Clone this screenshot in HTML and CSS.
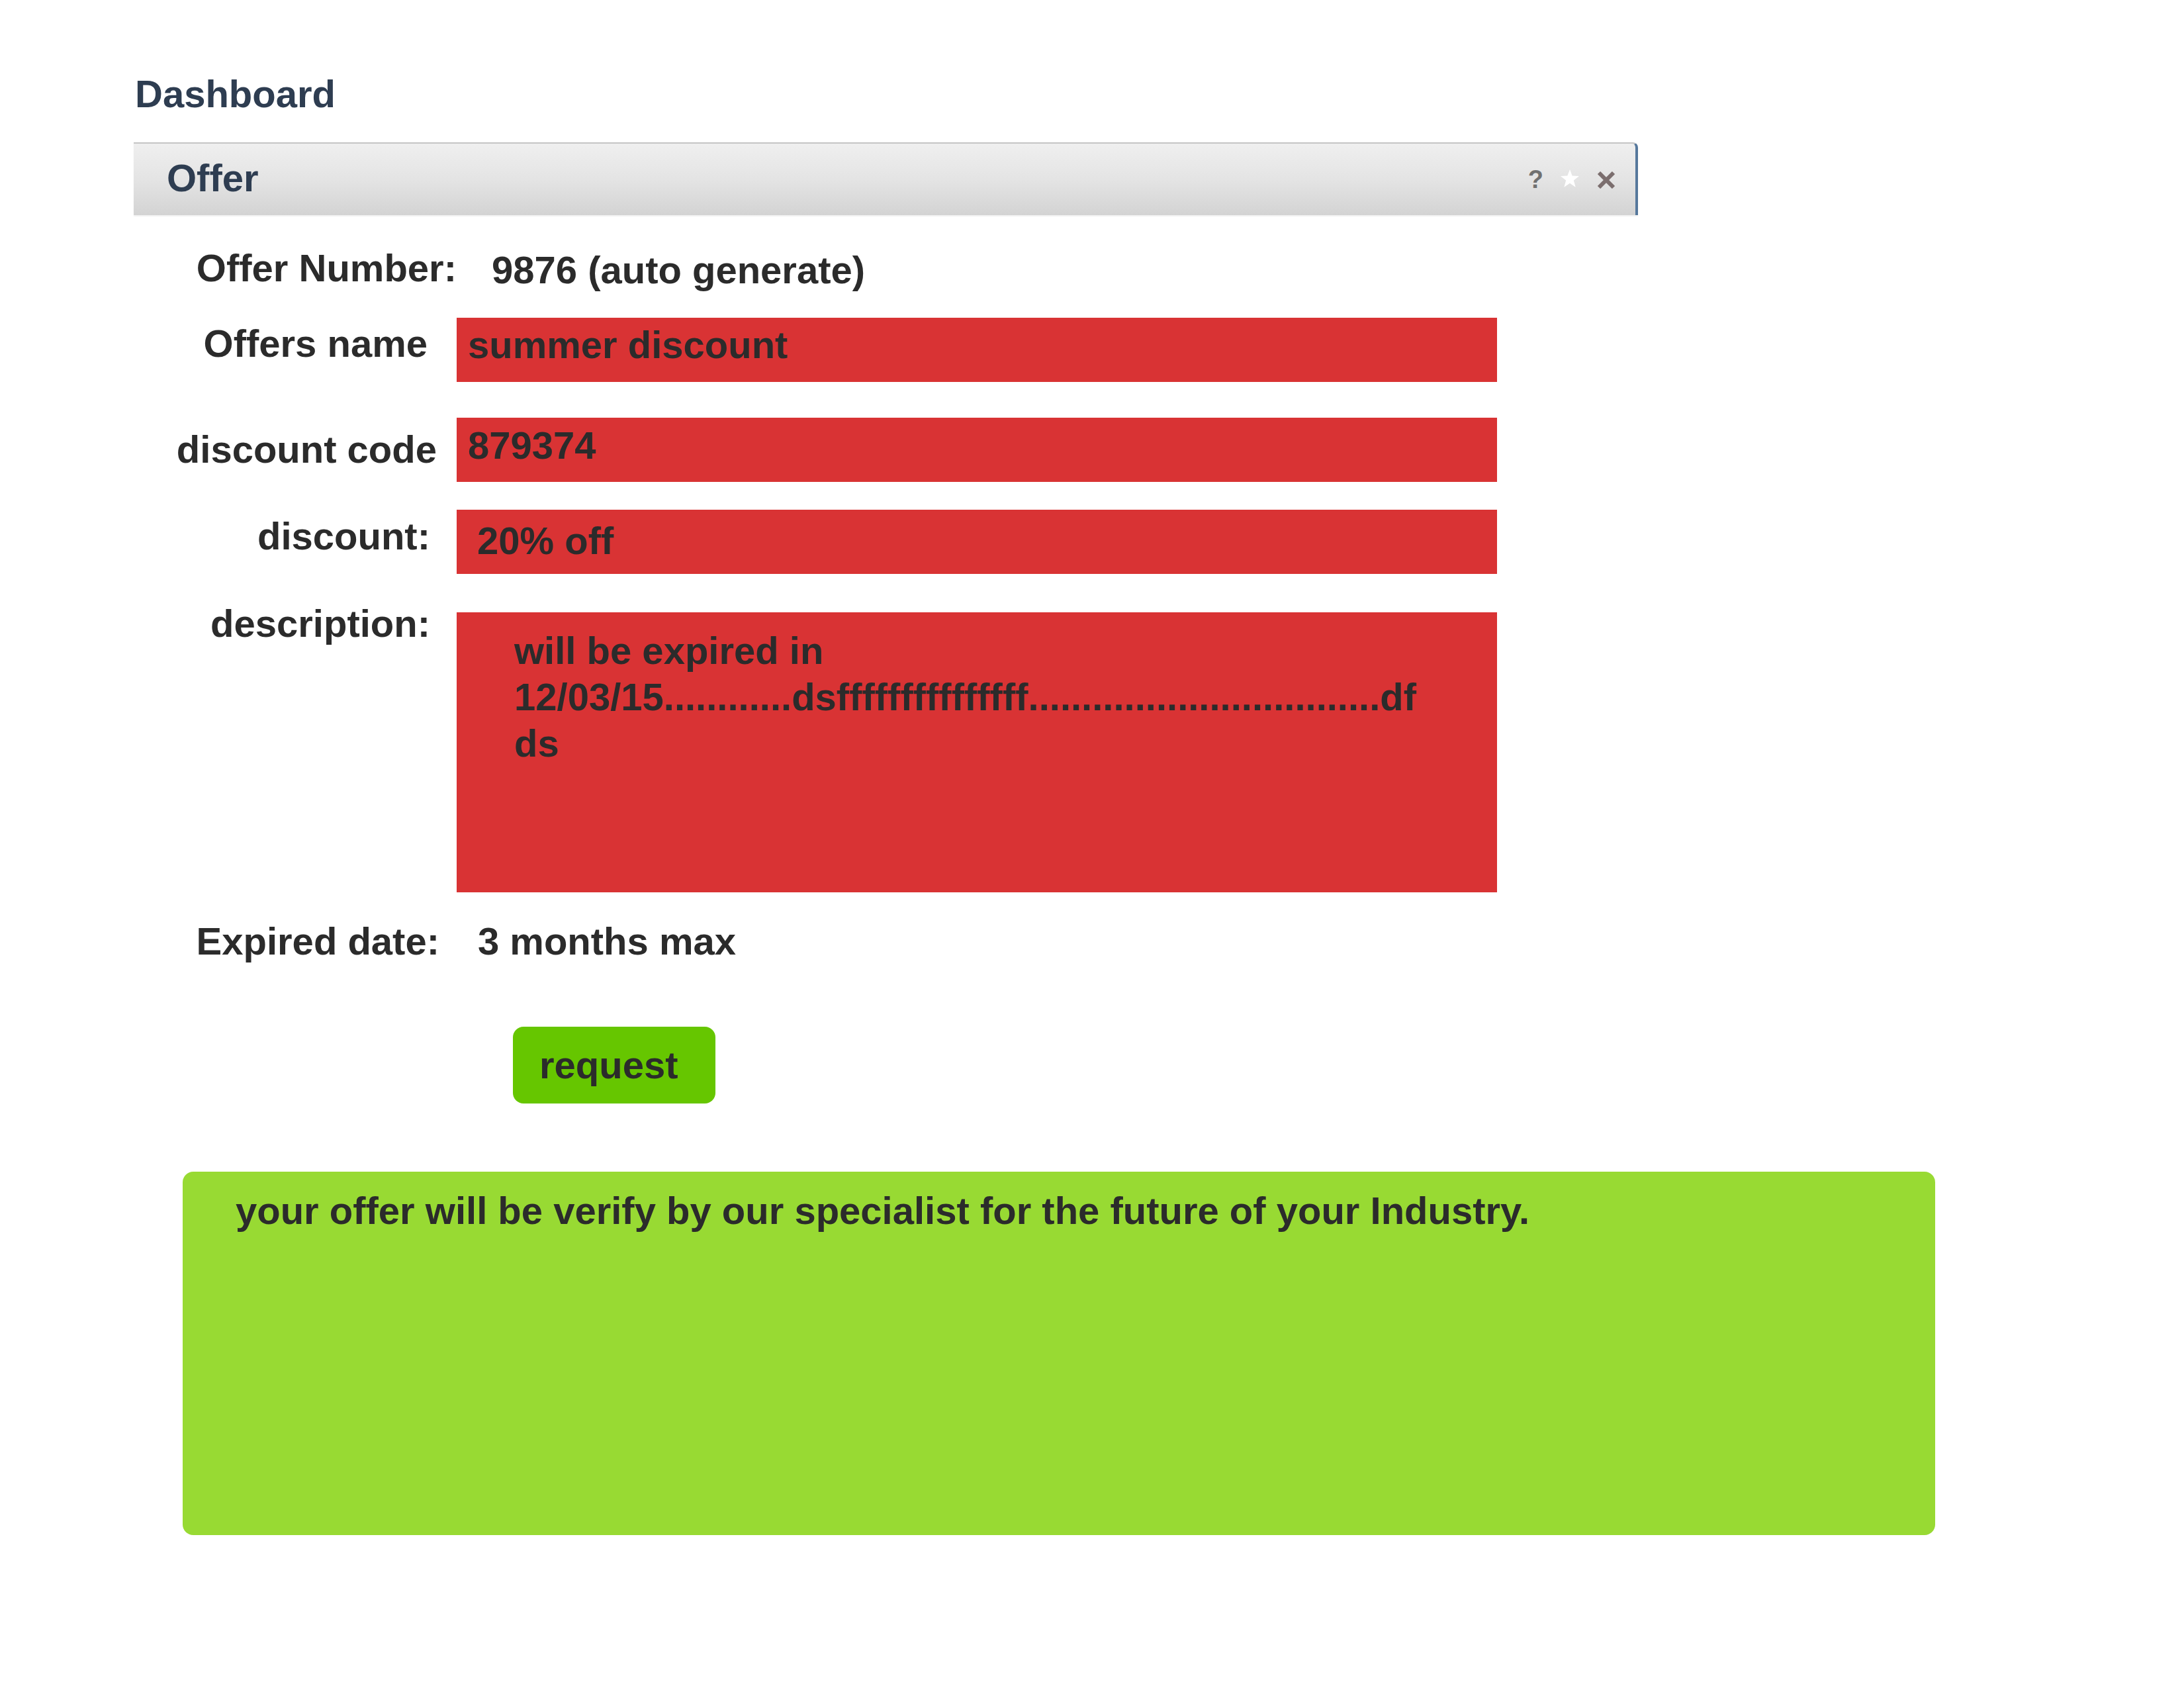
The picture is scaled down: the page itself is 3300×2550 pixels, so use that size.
FILE: index.html
```html
<!DOCTYPE html>
<html lang="en">
<head>
<meta charset="utf-8">
<title>Offer</title>
<link rel="stylesheet" href="styles.css">
</head>
<body>
<div class="page">
  <h1 class="dash">Dashboard</h1>

  <div class="panel-head">
    <h2 class="panel-title">Offer</h2>
    <div class="tools">
      <span class="tool-help">?</span>
      <svg class="tool-star" width="30" height="28" viewBox="0 0 30 28" aria-hidden="true">
        <polygon points="15,0 18.6,9.6 29,10 20.8,16.4 23.7,26.8 15,20.8 6.3,26.8 9.2,16.4 1,10 11.4,9.6" fill="#ffffff"/>
      </svg>
      <svg class="tool-close" width="28" height="26" viewBox="0 0 28 26" aria-hidden="true">
        <path d="M3 2 L25 24 M25 2 L3 24" stroke="#7b6e6e" stroke-width="6" fill="none"/>
      </svg>
    </div>
  </div>

  <div class="form">
    <div class="row row-number">
      <div class="label label-number">Offer Number:</div>
      <div class="value value-number">9876 (auto generate)</div>
    </div>

    <div class="row row-name">
      <div class="label label-name">Offers name</div>
      <div class="field field-name">summer discount</div>
    </div>

    <div class="row row-code">
      <div class="label label-code">discount code</div>
      <div class="field field-code">879374</div>
    </div>

    <div class="row row-discount">
      <div class="label label-discount">discount:</div>
      <div class="field field-discount">20% off</div>
    </div>

    <div class="row row-desc">
      <div class="label label-desc">description:</div>
      <div class="field field-desc">will be expired in 12/03/15............dsfffffffffffffff.................................df ds</div>
    </div>

    <div class="row row-expired">
      <div class="label label-expired">Expired date:</div>
      <div class="value value-expired">3 months max</div>
    </div>

    <div class="row row-action">
      <button class="btn-request" type="button">request</button>
    </div>
  </div>

  <div class="notice">your offer will be verify by our specialist for the future of your Industry.</div>
</div>
</body>
</html>
```

FILE: styles.css
```css
* {
  box-sizing: border-box;
}

html, body {
  margin: 0;
  padding: 0;
  background: #ffffff;
}

body {
  font-family: "Liberation Sans", Arial, Helvetica, sans-serif;
  font-weight: 700;
  font-size: 58px;
  line-height: 70px;
  color: #2b2b2b;
}

.page {
  width: 3300px;
  padding: 107px 0 0 200px;
}

.dash {
  margin: 0;
  padding-left: 4px;
  font-size: 58px;
  line-height: 70px;
  font-weight: 700;
  color: #2e3d51;
}

/* panel header */
.panel-head {
  margin: 38px 0 0 2px;
  width: 2273px;
  height: 110px;
  display: flex;
  align-items: flex-start;
  padding: 17px 30px 0 50px;
  border-top: 2px solid #c4c4c4;
  border-right: 4px solid #56789c;
  border-top-right-radius: 8px;
  background: linear-gradient(#efefef 0%, #e4e4e4 50%, #d3d3d3 100%);
  box-shadow: 0 2px 2px rgba(0, 0, 0, 0.06);
}

.panel-title {
  margin: 0;
  font-size: 58px;
  line-height: 70px;
  font-weight: 700;
  color: #2e3d51;
}

.tools {
  margin-left: auto;
  margin-top: 22px;
  height: 30px;
  display: flex;
  align-items: center;
}

.tool-help {
  font-size: 38px;
  line-height: 30px;
  color: #707070;
  font-weight: 700;
}

.tool-star {
  display: block;
  margin-left: 25px;
  margin-top: -2px;
}

.tool-close {
  display: block;
  margin-left: 26px;
  margin-top: 2px;
}

/* form */
.form {
  margin-top: 45px;
}

.row {
  display: flex;
  align-items: flex-start;
}

.label {
  flex: none;
  width: 490px;
  text-align: right;
  white-space: nowrap;
}

.label-number { padding-right: 0; }
.label-name { padding-right: 44px; padding-top: 4px; }
.label-code { padding-right: 30px; padding-top: 13px; }
.label-discount { padding-right: 40px; padding-top: 5px; }
.label-desc { padding-right: 40px; }
.label-expired { padding-right: 26px; }

.value-number {
  margin-left: 53px;
  padding-top: 3px;
}

.value-expired {
  margin-left: 32px;
}

.field {
  flex: none;
  width: 1572px;
  height: 97px;
  background: #d93334;
  padding: 6px 15px 0 17px;
  color: #2b2b2b;
}

.row-name { margin-top: 37px; }

.row-code { margin-top: 54px; }
.field-code { padding-top: 7px; }

.row-discount { margin-top: 42px; }
.field-discount { padding-top: 12px; padding-left: 31px; }

.row-desc { margin-top: 40px; }
.field-desc {
  margin-top: 18px;
  height: 423px;
  padding: 23px 87px 0 87px;
}

.row-expired { margin-top: 39px; }

.row-action { margin-top: 94px; }

.btn-request {
  margin-left: 575px;
  width: 306px;
  height: 116px;
  border: none;
  border-radius: 16px;
  background: #66c600;
  color: #2b2b2b;
  font-family: "Liberation Sans", Arial, Helvetica, sans-serif;
  font-weight: 700;
  font-size: 58px;
  line-height: 70px;
  display: flex;
  align-items: center;
  justify-content: flex-start;
  padding: 0 0 0 40px;
  cursor: pointer;
}

.notice {
  margin: 103px 0 0 76px;
  width: 2648px;
  height: 549px;
  border-radius: 16px;
  background: #98da33;
  padding: 24px 0 0 80px;
  color: #2b2b2b;
}
```
